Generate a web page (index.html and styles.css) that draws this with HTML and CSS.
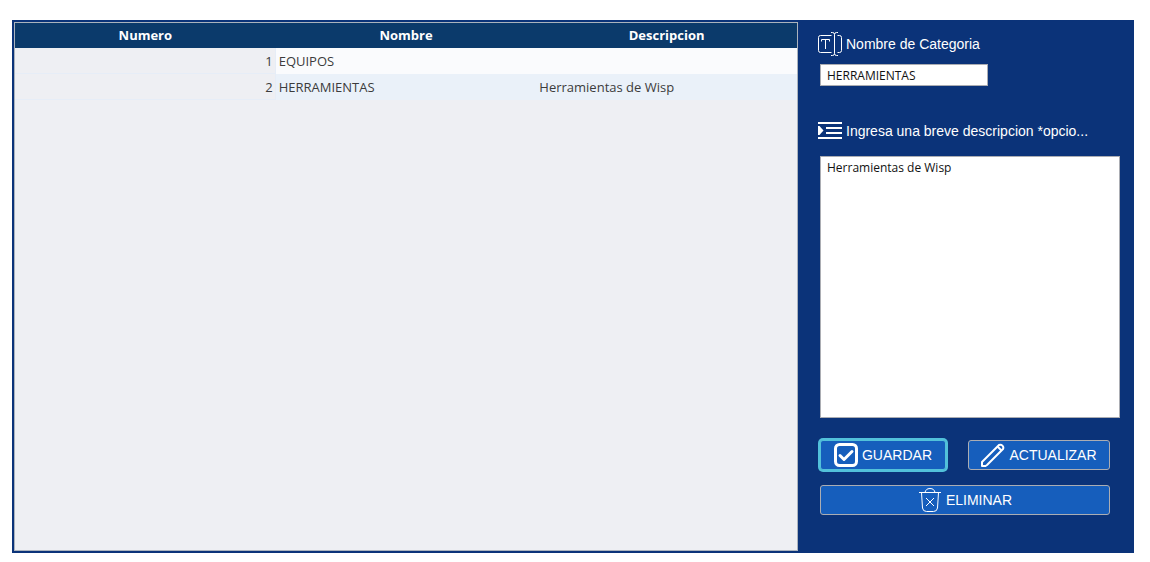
FILE: index.html
```
<!DOCTYPE html>
<html lang="es">
<head>
  <meta charset="UTF-8">
  <meta name="viewport" content="width=device-width, initial-scale=1.0">
  <title>Categorias</title>
  <link rel="stylesheet" href="styles.css">
</head>
<body>
  <main class="panel">
    <section class="tabla-marco">
      <table class="tabla">
        <thead>
          <tr>
            <th>Numero</th>
            <th>Nombre</th>
            <th>Descripcion</th>
          </tr>
        </thead>
        <tbody>
          <tr>
            <td class="numero">1</td>
            <td>EQUIPOS</td>
            <td></td>
          </tr>
          <tr>
            <td class="numero">2</td>
            <td>HERRAMIENTAS</td>
            <td>Herramientas de Wisp</td>
          </tr>
        </tbody>
      </table>
    </section>

    <form class="formulario">
      <label class="etiqueta" for="nombre">
        <svg width="24" height="24" viewBox="0 0 24 24" fill="none" stroke="currentColor" aria-hidden="true">
          <path d="M13.5 3.5H2.5a2 2 0 0 0-2 2v13a2 2 0 0 0 2 2h11"></path>
          <path d="M19.5 3.5h2a2 2 0 0 1 2 2v13a2 2 0 0 1-2 2h-2"></path>
          <path d="M3.5 9.5v-2h8v2M7.5 7.5v9.500"></path>
          <path d="M13 .5h1.500a2 2 0 0 1 2 2 2 2 0 0 1 2-2H20M16.500 2.500v19M13 23.500h1.500a2 2 0 0 0 2-2 2 2 0 0 0 2 2H20"></path>
        </svg>
        <span>Nombre de Categoria</span>
      </label>
      <input class="campo" type="text" id="nombre" name="nombre" value="HERRAMIENTAS">

      <label class="etiqueta etiqueta-descripcion" for="descripcion">
        <svg width="24" height="24" viewBox="0 0 24 24" fill="currentColor" aria-hidden="true">
          <path d="M0 3h24v2H0zM8 8h16v2H8zM8 13h16v2H8zM0 18h24v2H0z"></path>
          <path d="M0 7h1.500L5.500 11.500 1.500 16H0z"></path>
        </svg>
        <span>Ingresa una breve descripcion *opcio...</span>
      </label>
      <textarea class="campo area" id="descripcion" name="descripcion">Herramientas de Wisp</textarea>

      <div class="acciones">
        <button class="boton boton-guardar" type="submit">
          <svg width="24" height="24" viewBox="0 0 24 24" fill="none" stroke="currentColor" stroke-width="3" aria-hidden="true">
            <rect x="1.500" y="1.500" width="21" height="21" rx="4"></rect>
            <path d="M6 12.500l4 4 8-8" stroke-linecap="round" stroke-linejoin="round"></path>
          </svg>
          GUARDAR
        </button>
        <button class="boton boton-actualizar" type="button">
          <svg width="24" height="24" viewBox="0 0 24 24" fill="none" stroke="currentColor" stroke-width="2" stroke-linejoin="round" aria-hidden="true">
            <path d="M1 23v-4L18 2a3 3 0 0 1 4 4L6 22l-1.500 1z"></path>
            <path d="M16.500 3.500l4 4"></path>
          </svg>
          ACTUALIZAR
        </button>
        <button class="boton boton-eliminar" type="button">
          <svg width="24" height="24" viewBox="0 0 24 24" fill="none" stroke="currentColor" aria-hidden="true">
            <path d="M1 4.500h22M7 4.500C7.500 2 9 .5 12 .5s4.500 1.500 5 4"></path>
            <path d="M3.500 4.500l1 15.500a4 4 0 0 0 4 3.500h7a4 4 0 0 0 4-3.500l1-15.500"></path>
            <path d="M8 10l8 8M16 10l-8 8"></path>
          </svg>
          ELIMINAR
        </button>
      </div>
    </form>
  </main>
</body>
</html>
```
FILE: styles.css
```
:root {
  --panel: #0b3379;
  --header: #0b3a6b;
  --table-bg: #eeeff3;
  --row: #fafbfd;
  --row-alt: #eaf1f9;
  --button: #165ebc;
  --focus: #52c1da;
  --border: #abadb3;
}

* {
  box-sizing: border-box;
  margin: 0;
  padding: 0;
}

body {
  padding: 20px 16px 9px 12px;
  background: #fff;
  font-family: "Open Sans", "Segoe UI", sans-serif;
  font-size: 13px;
}

.panel {
  display: flex;
  min-height: calc(100vh - 29px);
  padding: 2px 0 2px 2px;
  background: var(--panel);
}

.tabla-marco {
  flex: 1;
  min-width: 0;
  border: 1px solid #abb3bd;
  background: var(--table-bg);
}

.tabla {
  width: 100%;
  table-layout: fixed;
  border-spacing: 0;
  color: #3c3c3c;
}

.tabla th {
  height: 25px;
  padding-bottom: 2px;
  background: var(--header);
  color: #fff;
  font-weight: bold;
  line-height: 20px;
}

.tabla td {
  height: 26px;
  padding: 0 3px;
  background: var(--row);
  line-height: 20px;
}

.tabla tbody tr:nth-child(even) td {
  background: var(--row-alt);
}

.tabla tbody tr td.numero {
  padding-right: 2px;
  border-right: 1px solid #e6edf7;
  border-bottom: 1px solid #e6edf7;
  background: var(--table-bg);
  text-align: right;
}

/* Formulario */
.formulario {
  display: flex;
  flex-direction: column;
  align-items: flex-start;
  flex: 0 0 336px;
  padding: 10px 14px 36px 20px;
}

.etiqueta {
  display: flex;
  align-items: center;
  gap: 4px;
  height: 24px;
  color: #fff;
  font-family: "Liberation Sans", Arial, sans-serif;
  font-size: 14px;
  line-height: 24px;
  white-space: nowrap;
}

.etiqueta-descripcion {
  margin-top: 33px;
}

.campo {
  width: 168px;
  height: 22px;
  margin: 8px 0 0 2px;
  padding: 0 6px;
  border: 1px solid var(--border);
  background: #fff;
  color: #111;
  font-family: "Open Sans", "Segoe UI", sans-serif;
  font-size: 12px;
  line-height: 16px;
  outline: none;
}

.area {
  flex: 1;
  width: 300px;
  min-height: 200px;
  margin-top: 13px;
  padding: 3px 6px;
  resize: none;
}

.acciones {
  display: grid;
  grid-template-columns: 126px 142px;
  gap: 15px 22px;
  margin: 22px 0 0 2px;
}

.boton {
  display: flex;
  align-items: center;
  justify-content: center;
  gap: 4px;
  height: 30px;
  border: 1px solid var(--border);
  border-radius: 3px;
  background: var(--button);
  color: #fff;
  font-family: "Liberation Sans", Arial, sans-serif;
  font-size: 14px;
  cursor: pointer;
}

.boton:hover {
  background: #1a6ad2;
}

.boton-guardar {
  border-color: var(--focus);
  box-shadow: 0 0 0 2px var(--focus);
}

.boton-eliminar {
  grid-column: 1 / -1;
}
```
